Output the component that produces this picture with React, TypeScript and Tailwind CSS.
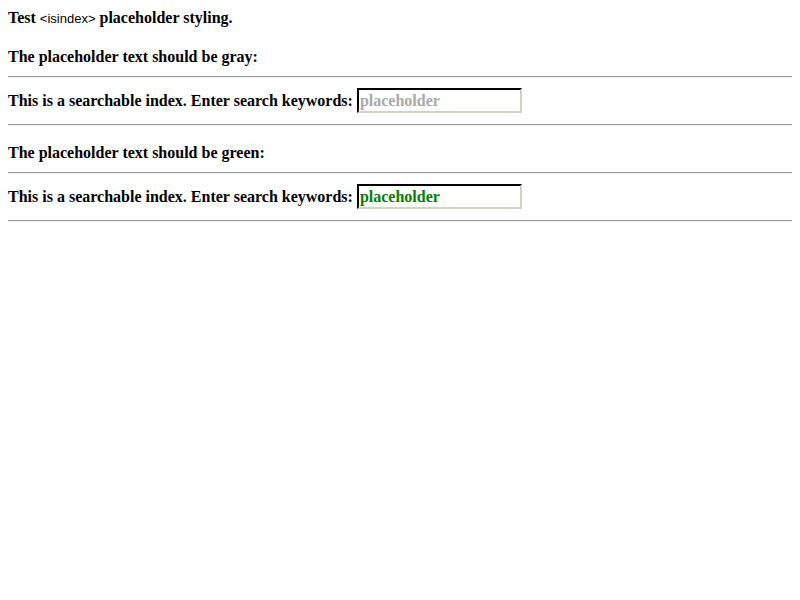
const serif = "font-['Liberation_Serif','Times_New_Roman',serif]"

function SearchIndex({ color }: { color: string }) {
  return (
    <div>
      <hr className="mt-[10px] h-[2px] border-0 border-t border-t-[#9a9a9a] border-b border-b-[#eeeeee]" />
      <div className="mt-[10px] flex h-[25px] items-center">
        <span className="leading-[18px]">This is a searchable index. Enter search keywords:</span>
        <input
          type="text"
          placeholder="placeholder"
          className={`ml-1 h-[25px] w-[165px] border-2 border-t-[#000] border-l-[#000] border-b-[#d4d0c8] border-r-[#d4d0c8] bg-white px-[1px] font-bold text-base outline-none ${color}`}
        />
      </div>
      <hr className="mt-[11px] h-[2px] border-0 border-t border-t-[#9a9a9a] border-b border-b-[#eeeeee]" />
    </div>
  )
}

export default function App() {
  return (
    <div className={`min-h-[600px] bg-white p-2 text-base font-bold text-black ${serif}`}>
      <p className="pt-[1px] leading-[18px]">
        Test <span className="font-['Liberation_Sans',Arial,sans-serif] text-[13px] font-normal">&lt;isindex&gt;</span> placeholder styling.
      </p>

      <p className="mt-5 leading-[18px]">The placeholder text should be gray:</p>
      <SearchIndex color="placeholder:text-[#a9a9a9]" />

      <p className="mt-[18px] leading-[18px]">The placeholder text should be green:</p>
      <SearchIndex color="placeholder:text-[#008000]" />
    </div>
  )
}
